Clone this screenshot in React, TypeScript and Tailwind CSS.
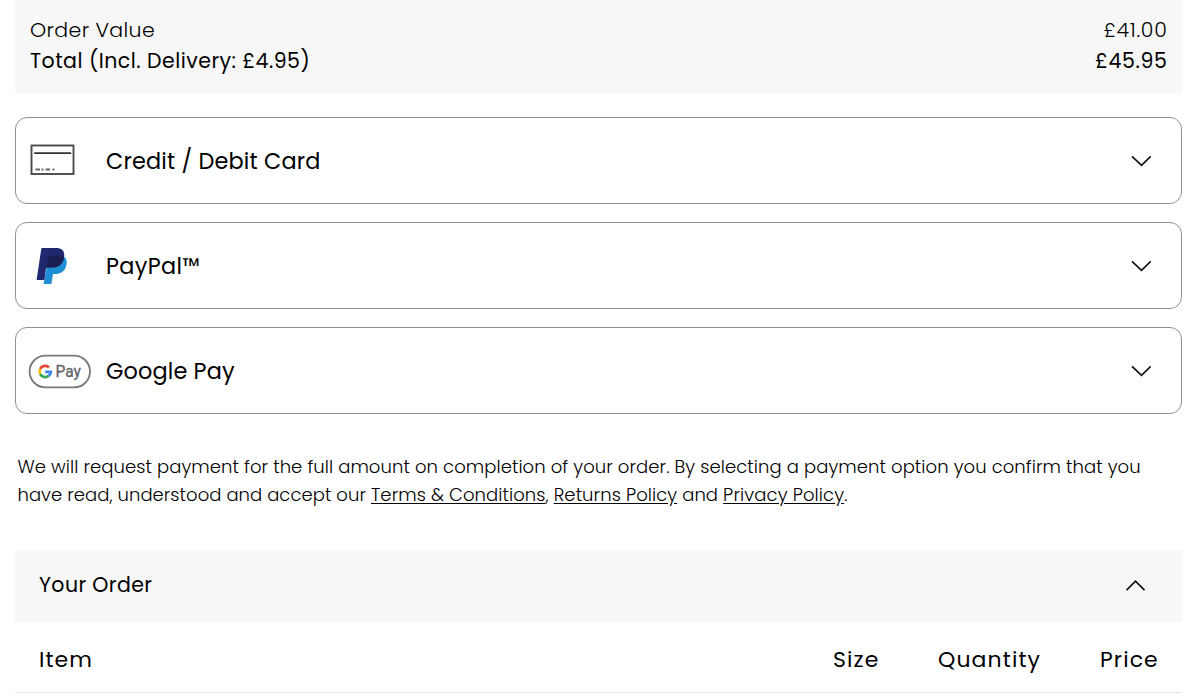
import React from 'react';

interface ChevronProps {
    up?: boolean;
}

const Chevron = ({ up }: ChevronProps) => (
    <svg width="20" height="12" viewBox="0 0 20 12" fill="none" stroke="#111" strokeWidth="1.7" className="shrink-0">
        <path d={up ? 'M.5 10.200 9.500 1.200l9 9' : 'M1 1.300 10.500 10.300l9.300-9'} />
    </svg>
);

const CardIcon = () => (
    <svg width="46" height="34" viewBox="0 0 46 34" fill="none">
        <rect x="1.500" y="1.500" width="42" height="28.500" stroke="#4a4a4a" strokeWidth="1.900" />
        <path d="M4.200 9.200h37" stroke="#333" strokeWidth="1.800" />
        <path d="M5.500 25.500h4.500M11.500 25.500h2M15.500 25.500h4.500M22.500 25.500h2" stroke="#666" strokeWidth="2" />
    </svg>
);

const PayPalIcon = () => (
    <svg width="32" height="38" viewBox="0 0 32 38" className="ml-[6px] mt-px">
        <path d="M13 10h15.500c2.300 2 2.700 4.900 1.800 8.500-1.500 6.100-5.600 8.500-11.800 8.500h-1.500l-1.600 10H7.600L9 29Z" fill="#1f8fd5" />
        <path d="M6.600 1h13.600c6.100 0 9 3.500 7.800 9.700C26.700 17.500 22.500 20.500 16 20.500h-4.200c-1 0-1.600.5-1.800 1.600L8.300 33H.6L5.200 2.200C5.300 1.400 5.800 1 6.600 1Z" fill="#20296f" />
        <path d="M12.500 9.500c.2-.7.600-1 1.400-1h9.800c1.700 0 3.200.4 4.400 1-.7 7.500-5.300 11-12.100 11h-5.300Z" fill="#1b1e50" />
    </svg>
);

const GooglePayIcon = () => (
    <svg width="64" height="36" viewBox="0 0 64 36" className="ml-[-2px] mt-[2px]">
        <rect x="1.600" y="1.600" width="60.400" height="31.800" rx="15.900" fill="#fff" stroke="#77797c" strokeWidth="1.800" />
        <g fill="none" strokeWidth="2.800">
            <path d="M21 13.200A5.700 5.700 0 0 0 12.200 14.900" stroke="#ea4335" />
            <path d="M12.200 14.900a5.700 5.700 0 0 0 0 5.200" stroke="#fbbc04" />
            <path d="M12.200 20.100a5.700 5.700 0 0 0 8.400 1.800" stroke="#34a853" />
            <path d="M20.600 21.900a5.700 5.700 0 0 0 2.200-4.100h-5.700" stroke="#4285f4" />
        </g>
        <text x="27.500" y="23.300" fontSize="17" textLength="25.500" lengthAdjust="spacingAndGlyphs" fill="#5f6368" stroke="#5f6368" strokeWidth=".3" className="font-['Roboto',sans-serif]">Pay</text>
    </svg>
);

const methods = [
    { name: 'Credit / Debit Card', icon: <CardIcon />, spacing: 'tracking-[0.17px]' },
    { name: 'PayPal™', icon: <PayPalIcon />, spacing: 'tracking-[0.34px]' },
    { name: 'Google Pay', icon: <GooglePayIcon />, spacing: 'tracking-[0.14px]' },
];

const App = () => {
    return (
        <div className="h-[695px] overflow-hidden bg-white pl-[15px] pr-1 font-['Poppins','Inter',sans-serif] text-black">
            <div className="h-[93px] bg-[#f7f7f7] px-[15px] pt-[14px] text-[20.500px] leading-[31px]">
                <div className="flex justify-between font-light">
                    <span className="tracking-[0.37px]">Order Value</span>
                    <span className="-mr-[0.5px] tracking-[0.7px]">£41.00</span>
                </div>
                <div className="flex justify-between">
                    <span className="tracking-[0.48px]">Total (Incl. Delivery: £4.95)</span>
                    <span className="-mr-[0.5px] tracking-[0.65px]">£45.95</span>
                </div>
            </div>

            <div className="mt-6 space-y-[18px]">
                {methods.map((method) => (
                    <button
                        key={method.name}
                        className="flex h-[87px] w-full items-center rounded-xl border border-[#919191] pl-[14px] pr-[30px] text-left"
                    >
                        <span className="flex w-[76px] shrink-0 items-center">{method.icon}</span>
                        <span className={`flex-1 pt-px text-[22.4px] leading-[34px] ${method.spacing}`}>{method.name}</span>
                        <Chevron />
                    </button>
                ))}
            </div>

            <p className="mt-[39px] whitespace-nowrap pl-[2.500px] text-[18px] font-light leading-7 tracking-[0.075px]">
                We will request payment for the full amount on completion of your order. By selecting a payment option you confirm that you
                <br />
                <span className="tracking-[0.04px]">have read, understood and accept our </span>
                <a href="#" className="underline underline-offset-2">Terms &amp; Conditions</a>,{' '}
                <a href="#" className="underline underline-offset-2">Returns Policy</a> and{' '}
                <a href="#" className="underline underline-offset-2 tracking-[0.12px]">Privacy Policy</a>.
            </p>

            <div className="mt-[41px] flex h-[72px] items-center justify-between bg-[#f7f7f7] pl-6 pr-[36px]">
                <h2 className="pb-[2px] text-[20.500px] tracking-[0.4px]">Your Order</h2>
                <Chevron up />
            </div>
            <div className="flex h-[71px] items-center border-b border-[#e5e5e5] px-6 pt-[5px] text-[22px] tracking-[1.1px]">
                <span className="flex-1">Item</span>
                <span className="w-[105px]">Size</span>
                <span className="w-[162px]">Quantity</span>
                <span className="w-[58px]">Price</span>
            </div>
        </div>
    );
};

export default App;
